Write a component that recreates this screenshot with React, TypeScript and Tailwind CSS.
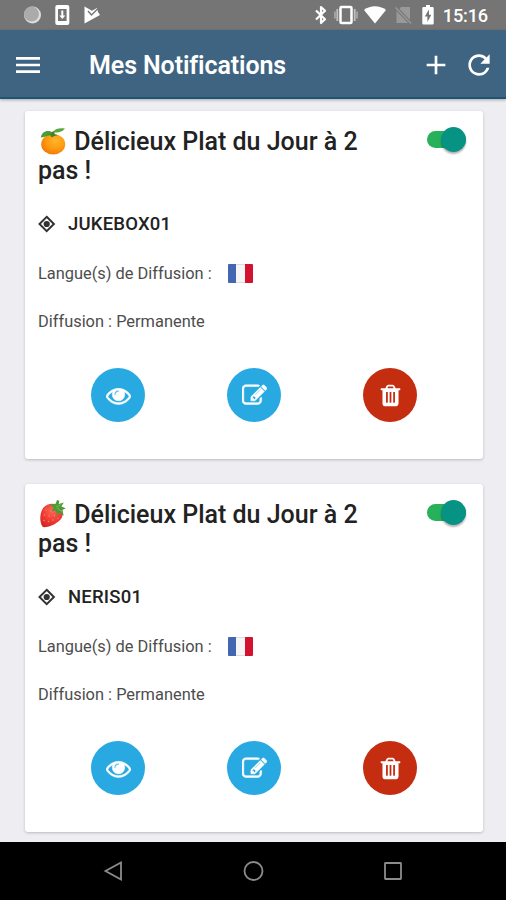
import type { ReactNode } from "react";
import { MdAdd, MdMenu, MdRefresh } from "react-icons/md";

type Notification = {
  id: number;
  fruit: "orange" | "strawberry";
  title: string;
  place: string;
  diffusion: string;
};

const notifications: Notification[] = [
  {
    id: 1,
    fruit: "orange",
    title: "Délicieux Plat du Jour à 2 pas !",
    place: "JUKEBOX01",
    diffusion: "Permanente",
  },
  {
    id: 2,
    fruit: "strawberry",
    title: "Délicieux Plat du Jour à 2 pas !",
    place: "NERIS01",
    diffusion: "Permanente",
  },
];

function OrangeIcon() {
  return (
    <svg className="mr-[2px] inline-block h-[28px] w-[28px] align-[-5px]" viewBox="0 0 28 28">
      <defs>
        <radialGradient id="orange" cx="0.6" cy="0.35" r="0.7">
          <stop offset="0" stopColor="#ffb52b" />
          <stop offset="0.55" stopColor="#fe9a10" />
          <stop offset="1" stopColor="#ee7707" />
        </radialGradient>
      </defs>
      <ellipse cx="15.200" cy="17.200" rx="12" ry="10.300" fill="url(#orange)" />
      <path d="M14.500 5.500C10 2.500 4 4 2.800 10.500c5-.2 7-2.200 11.700-3.200z" fill="#4d9b35" />
      <path d="M15.500 4.500C17.500 1.500 21.500.8 27 1.500c-2.800 3.800-7.500 4.500-11.500 3.700z" fill="#5aa83c" />
      <path d="M14 5l2-1 .8 3.200 3 1-3.500.8-2.800 1.600-.8-2.100-2.900-1 3.200-.5z" fill="#3f842d" />
    </svg>
  );
}

function StrawberryIcon() {
  return (
    <svg className="mr-[2px] inline-block h-[28px] w-[28px] align-[-5px]" viewBox="0 0 28 28">
      <defs>
        <radialGradient id="berry" cx="0.55" cy="0.3" r="0.8">
          <stop offset="0" stopColor="#ff6655" />
          <stop offset="0.55" stopColor="#ee3c34" />
          <stop offset="1" stopColor="#ce2024" />
        </radialGradient>
      </defs>
      <path
        d="M5.500 7.500C9.500 2.500 17 2.700 21 6.200c5 4.300 5 11-.5 15.300-4.500 3.400-11 6.300-15.500 5.600C1.300 23 1.300 13 5.500 7.500z"
        fill="url(#berry)"
      />
      <g fill="#f98a6c">
        <circle cx="8" cy="10" r=".7" />
        <circle cx="13" cy="11" r=".7" />
        <circle cx="6.500" cy="15" r=".7" />
        <circle cx="11" cy="16" r=".7" />
        <circle cx="16.500" cy="15.500" r=".7" />
        <circle cx="6" cy="20.500" r=".7" />
        <circle cx="10.500" cy="21.500" r=".7" />
        <circle cx="15" cy="20" r=".7" />
        <circle cx="20" cy="18.500" r=".7" />
      </g>
      <path
        d="M11.500 4.200l6.200-.5L19 0l2.300.8-.5 3.200 5-1.400-2.400 4 4.300 1.700-3.300 1.800 1.300 5.600-4.600-3.200-1.400 3.400-2-5.200-4.400.5 2.300-3.600z"
        fill="#4f9a38"
      />
      <path d="M18 7l5-2.500M19 8l5 3.500" stroke="#79b854" strokeWidth="1" />
    </svg>
  );
}

function StatusBar() {
  return (
    <div className="flex h-[30px] shrink-0 items-center bg-[#757575] text-white">
      <svg className="ml-[23px] h-[20px] w-[19px]" viewBox="0 0 19 20">
        <circle cx="9.500" cy="10" r="8.500" fill="#dedede" />
        <circle cx="8.500" cy="9" r="7.500" fill="#ababab" />
      </svg>
      <svg className="ml-[13px] h-[20px] w-[15px]" viewBox="0 0 15 20">
        <rect x=".3" y="0" width="14" height="20" rx="2" fill="#fff" />
        <rect x="3" y="4" width="8.600" height="12" fill="#757575" />
        <path d="M6.300 5.500h2v5h2l-3 3.500-3-3.500h2z" fill="#fff" />
      </svg>
      <svg className="ml-[14px] h-[18px] w-[16px]" viewBox="0 0 16 18">
        <path d="M.5.500L8 4.700 13 2l1 4 2 3L.5 17.500z" fill="#fff" />
        <path d="M4 5l3.500 4 6.500-6.500" stroke="#757575" strokeWidth="1.400" fill="none" />
      </svg>
      <div className="ml-auto flex items-center pr-[18px]">
        <svg className="h-[20px] w-[14px]" viewBox="0 0 14 20">
          <path
            d="M2 5.500l9 8.800L7 18V2l4 3.700-9 8.800"
            fill="none"
            stroke="#fff"
            strokeWidth="2.200"
            strokeLinejoin="round"
          />
        </svg>
        <svg className="ml-[6px] h-[20px] w-[24px]" viewBox="0 0 24 20">
          <path d="M1 6.500v7M23 6.500v7" stroke="#b0b0b0" strokeWidth="1.500" />
          <path d="M3.300 4v12M20.700 4v12" stroke="#c0c0c0" strokeWidth="1.800" />
          <rect x="6.500" y="2" width="11" height="16" rx="1" fill="none" stroke="#fff" strokeWidth="2.500" />
        </svg>
        <svg className="ml-[6px] h-[18px] w-[22px]" viewBox="0 0 22 18">
          <path d="M0 4C6.500-1 15.500-1 22 4L11 17.500z" fill="#fff" />
        </svg>
        <svg className="ml-[9px] h-[18px] w-[17px]" viewBox="0 0 17 18">
          <path d="M6 1h9v13L4.500 3zM1.500 5L13 17H1.500z" fill="#999" />
          <path d="M.5 1.500l15.500 16" stroke="#999" strokeWidth="1.500" />
        </svg>
        <svg className="ml-[10px] h-[20px] w-[12px]" viewBox="0 0 12 20">
          <path d="M4 0h4v2h2.500q1.200 0 1.200 1.200v15q0 1.300-1.200 1.300h-9Q.3 19.500.3 18.200v-15Q.3 2 1.500 2H4z" fill="#fff" />
          <path d="M7 4.500L2.800 11.500H5.400V17L9.300 9.800H7z" fill="#757575" />
        </svg>
        <span className="ml-[9px] pt-[2px] text-[18.200px] leading-none font-medium tracking-[-0.200px]">15:16</span>
      </div>
    </div>
  );
}

function Header() {
  return (
    <header className="z-10 flex h-[69px] shrink-0 items-center border-b-2 border-[#1f5475] bg-[#3e6482] pt-[2px] text-white shadow-[0_1px_3px_rgba(0,0,0,0.3)]">
      <button type="button" className="ml-[12px]">
        <MdMenu className="h-8 w-8" />
      </button>
      <h1 className="ml-[45px] pt-[3px] text-[25px] leading-8 font-semibold tracking-[-0.100px]">Mes Notifications</h1>
      <button type="button" className="ml-auto">
        <MdAdd className="h-8 w-8" />
      </button>
      <button type="button" className="mr-[11px] ml-[11px]">
        <MdRefresh className="h-8 w-8" />
      </button>
    </header>
  );
}

function Toggle() {
  return (
    <div className="flex h-[25px] w-[39px] items-center">
      <div className="flex h-[17px] w-[39px] items-center justify-end rounded-full bg-[#27b15a]">
        <div className="h-[25px] w-[25px] shrink-0 rounded-full bg-[#079384] shadow-[0_2px_2px_rgba(0,0,0,0.3)]" />
      </div>
    </div>
  );
}

function RoundButton({ color, children }: { color: string; children: ReactNode }) {
  return (
    <button type="button" className={`flex h-[54px] w-[54px] items-center justify-center rounded-full pt-[1px] text-white ${color}`}>
      <svg className="h-[25px] w-[25px]" viewBox="0 0 1792 1792" fill="currentColor" stroke="currentColor" strokeWidth="40">
        {children}
      </svg>
    </button>
  );
}

function NotificationCard({ item }: { item: Notification }) {
  return (
    <article className="h-[348px] shrink-0 rounded-[3px] bg-white px-[13px] pt-[16px] text-[#222] shadow-[0_1px_3px_rgba(0,0,0,0.22)]">
      <div className="flex justify-between">
        <h2 className="h-[59px] w-[340px] text-[25px] leading-[29px] font-medium">
          {item.fruit === "orange" ? <OrangeIcon /> : <StrawberryIcon />} {item.title}
        </h2>
        <div className="mr-[4px]">
          <Toggle />
        </div>
      </div>

      <div className="mt-[25px] flex h-[26px] items-center">
        <svg className="h-[18px] w-[18px]" viewBox="0 0 18 18">
          <path d="M8.700 1.800L15.900 9 8.700 16.200 1.500 9z" fill="none" stroke="#333" strokeWidth="2" />
          <circle cx="8.700" cy="9" r="3.100" fill="#333" />
        </svg>
        <span className="ml-[12px] pt-[2px] text-[18.500px] font-medium tracking-[0.200px]">{item.place}</span>
      </div>

      <div className="mt-[24px] flex h-[24px] items-center text-[#4d4d4d]">
        <span className="pt-[3px] text-[16.400px]">Langue(s) de Diffusion :</span>
        <div className="ml-[16px] flex h-[19px] w-[25px] overflow-hidden rounded-[1px]">
          <div className="w-[8px] bg-[#4266b0]" />
          <div className="grow border-y border-[#ddd] bg-[#f5f5f5]" />
          <div className="w-[8px] bg-[#d2122e]" />
        </div>
      </div>

      <p className="mt-[25px] text-[16.400px] leading-[24px] text-[#4d4d4d]">
        Diffusion : {item.diffusion}
      </p>

      <div className="mt-[34px] grid grid-cols-[repeat(3,136px)] justify-items-center pl-[12px]">
        <RoundButton color="bg-[#28a9e2]">
          <path d="M1664 960q-152-236-381-353 61 104 61 225 0 185-131.500 316.500t-316.500 131.500-316.500-131.500-131.500-316.500q0-121 61-225-229 117-381 353 133 205 333.500 326.500t434.500 121.500 434.500-121.500 333.500-326.500zm-720-384q0-20-14-34t-34-14q-125 0-214.500 89.500t-89.500 214.500q0 20 14 34t34 14 34-14 14-34q0-86 61-147t147-61q20 0 34-14t14-34zm848 384q0 34-20 69-140 230-376.500 368.500t-499.500 138.500-499.500-139-376.500-368q-20-35-20-69t20-69q140-229 376.500-368t499.500-139 499.500 139 376.500 368q20 35 20 69z" />
        </RoundButton>
        <RoundButton color="bg-[#28a9e2]">
          <path d="M888 1184l116-116-152-152-116 116v56h96v96h56zm440-720q-16-16-33 1l-350 350q-17 17-1 33t33-1l350-350q17-17 1-33zm80 594v190q0 119-84.500 203.500t-203.500 84.500h-832q-119 0-203.500-84.500t-84.500-203.500v-832q0-119 84.500-203.500t203.500-84.500h832q63 0 117 25 15 7 18 23 3 17-9 29l-49 49q-14 14-32 8-23-6-45-6h-832q-66 0-113 47t-47 113v832q0 66 47 113t113 47h832q66 0 113-47t47-113v-126q0-13 9-22l64-64q15-15 35-7t20 29zm-96-738l288 288-672 672h-288v-288zm444 132l-92 92-288-288 92-92q28-28 68-28t68 28l152 152q28 28 28 68t-28 68z" />
        </RoundButton>
        <RoundButton color="bg-[#c42d10]">
          <path
            strokeWidth="0"
            d="M704 1376v-704q0-14-9-23t-23-9h-64q-14 0-23 9t-9 23v704q0 14 9 23t23 9h64q14 0 23-9t9-23zm256 0v-704q0-14-9-23t-23-9h-64q-14 0-23 9t-9 23v704q0 14 9 23t23 9h64q14 0 23-9t9-23zm256 0v-704q0-14-9-23t-23-9h-64q-14 0-23 9t-9 23v704q0 14 9 23t23 9h64q14 0 23-9t9-23zm-544-992h448l-48-117q-7-9-17-11h-317q-10 2-17 11zm928 32v64q0 14-9 23t-23 9h-96v948q0 83-47 143.500t-113 60.500h-832q-66 0-113-58.500t-47-141.500v-952h-96q-14 0-23-9t-9-23v-64q0-14 9-23t23-9h309l70-167q15-37 54-63t79-26h320q40 0 79 26t54 63l70 167h309q14 0 23 9t9 23z"
          />
        </RoundButton>
      </div>
    </article>
  );
}

function NavBar() {
  return (
    <nav className="flex h-[58px] shrink-0 items-center justify-center gap-[118px] bg-black">
      <svg className="h-[22px] w-[22px]" viewBox="0 0 22 22">
        <path d="M19 2.500v17L3.500 11z" fill="none" stroke="#8c8c8c" strokeWidth="1.800" />
      </svg>
      <svg className="h-[22px] w-[22px]" viewBox="0 0 22 22">
        <circle cx="11.500" cy="11" r="9" fill="none" stroke="#8c8c8c" strokeWidth="1.800" />
      </svg>
      <svg className="h-[22px] w-[22px]" viewBox="0 0 22 22">
        <rect x="3" y="3" width="16" height="16" rx=".5" fill="none" stroke="#8c8c8c" strokeWidth="1.800" />
      </svg>
    </nav>
  );
}

function App() {
  return (
    <div className="flex h-[900px] w-[506px] flex-col overflow-hidden bg-[#eeedf2] font-['Roboto',sans-serif]">
      <StatusBar />
      <Header />
      <main className="flex min-h-0 grow flex-col gap-[25px] pt-[12px] pr-[23px] pl-[25px]">
        {notifications.map((item) => (
          <NotificationCard key={item.id} item={item} />
        ))}
      </main>
      <NavBar />
    </div>
  );
}

export default App;
